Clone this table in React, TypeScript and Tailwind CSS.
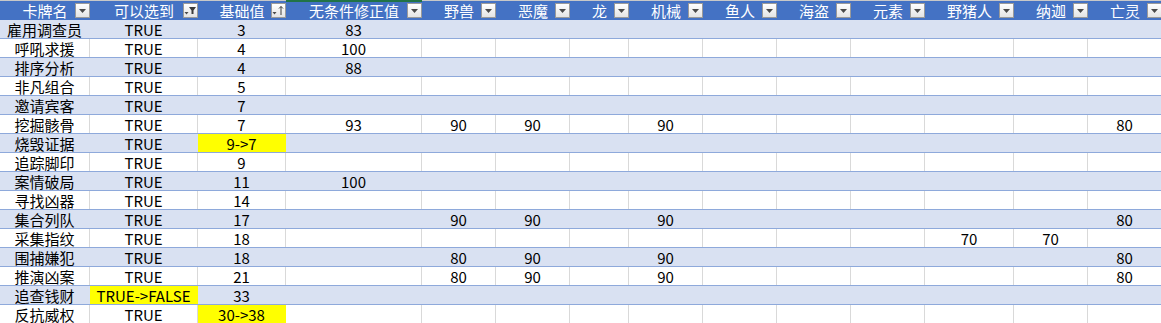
import React from "react";

const COLS = [90, 108, 88, 136, 74, 74, 59, 74, 74, 74, 74, 89, 74, 74];
const HEADERS = ["卡牌名", "可以选到", "基础值", "无条件修正值", "野兽", "恶魔", "龙", "机械", "鱼人", "海盗", "元素", "野猪人", "纳迦", "亡灵"];

type Cell = string | { v: string; y: true };

const ROWS: Cell[][] = [
  ["雇用调查员", "TRUE", "3", "83"],
  ["呼吼求援", "TRUE", "4", "100"],
  ["排序分析", "TRUE", "4", "88"],
  ["非凡组合", "TRUE", "5"],
  ["邀请宾客", "TRUE", "7"],
  ["挖掘骸骨", "TRUE", "7", "93", "90", "90", "", "90", "", "", "", "", "", "80"],
  ["烧毁证据", "TRUE", { v: "9->7", y: true }],
  ["追踪脚印", "TRUE", "9"],
  ["案情破局", "TRUE", "11", "100"],
  ["寻找凶器", "TRUE", "14"],
  ["集合列队", "TRUE", "17", "", "90", "90", "", "90", "", "", "", "", "", "80"],
  ["采集指纹", "TRUE", "18", "", "", "", "", "", "", "", "", "70", "70", ""],
  ["围捕嫌犯", "TRUE", "18", "", "80", "90", "", "90", "", "", "", "", "", "80"],
  ["推演凶案", "TRUE", "21", "", "80", "90", "", "90", "", "", "", "", "", "80"],
  ["追查钱财", { v: "TRUE->FALSE", y: true }, "33"],
  ["反抗威权", "TRUE", { v: "30->38", y: true }],
];

const gridStyle = "grid grid-cols-[90px_108px_88px_136px_74px_74px_59px_74px_74px_74px_74px_89px_74px_74px]";

function Triangle() {
  return (
    <svg width="7" height="4" viewBox="0 0 7 4">
      <polygon points="0,0 7,0 3.5,4" fill="#4a4a4a" />
    </svg>
  );
}

function FilterButton({ kind }: { kind: "plain" | "filter" | "sort" }) {
  return (
    <div className="absolute right-[0px] top-[2px] w-[15px] h-[15px] border border-[#9a9a9a] bg-gradient-to-b from-[#ffffff] to-[#e4e4e4] flex items-center justify-center">
      {kind === "plain" && <Triangle />}
      {kind === "filter" && (
        <svg width="13" height="11" viewBox="0 0 13 11">
          <polygon points="0.5,7 4.5,7 2.5,9.5" fill="#4a4a4a" />
          <polygon points="5,2 12,2 9.5,5.5 9.5,9 7.5,9 7.5,5.5" fill="#3c3c3c" />
        </svg>
      )}
      {kind === "sort" && (
        <svg width="13" height="11" viewBox="0 0 13 11">
          <polygon points="0.5,7 4.5,7 2.5,9.5" fill="#4a4a4a" />
          <line x1="9" y1="1.5" x2="9" y2="10" stroke="#3c3c3c" strokeWidth="1" />
          <polyline points="7,3.5 9,1.5 11,3.5" fill="none" stroke="#3c3c3c" strokeWidth="1" />
        </svg>
      )}
    </div>
  );
}

export default function App() {
  return (
    <div
      className="w-[1161px] h-[323px] overflow-hidden bg-white text-[15px] leading-none text-black"
      style={{ fontFamily: '"Noto Sans CJK SC", "Noto Sans", sans-serif' }}
    >
      <div className={`${gridStyle} h-[20px] bg-[#4472c4] border-t border-[#c8c8c8]`}>
        {HEADERS.map((h, i) => (
          <div key={i} className="relative flex items-center justify-center text-white">
            {i === 3 && <div className="absolute left-0 right-0 top-[-1px] h-[2px] bg-[#217346]" />}
            <span className="mt-[-1px]">{h}</span>
            <FilterButton kind={i === 1 ? "filter" : i === 2 ? "sort" : "plain"} />
          </div>
        ))}
      </div>
      {ROWS.map((row, r) => {
        const blue = r % 2 === 0;
        return (
          <div
            key={r}
            className={`${gridStyle} h-[19px] border-b border-[#8ea9db] ${blue ? "bg-[#d9e1f2]" : "bg-white"}`}
          >
            {COLS.map((_, c) => {
              const cell = row[c];
              const isY = typeof cell === "object" && cell !== null;
              const text = cell === undefined ? "" : typeof cell === "string" ? cell : cell.v;
              return (
                <div
                  key={c}
                  className={`flex items-center justify-center border-r ${
                    isY ? "bg-[#ffff00] border-[#ffff00]" : blue ? "border-transparent" : "border-[#d9d9d9]"
                  }`}
                >
                  {text}
                </div>
              );
            })}
          </div>
        );
      })}
    </div>
  );
}
